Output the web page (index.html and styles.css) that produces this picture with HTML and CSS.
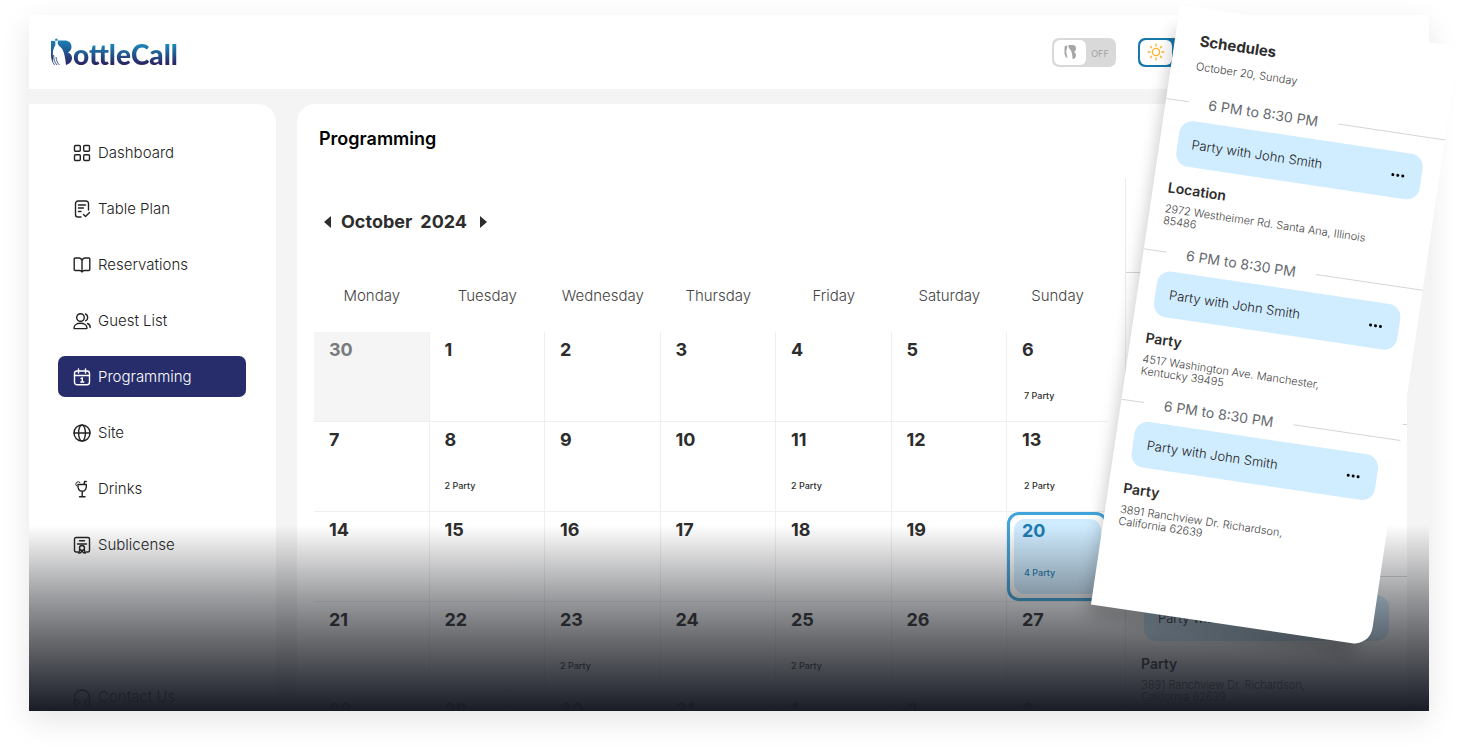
FILE: index.html
```html
<!DOCTYPE html>
<html lang="en">
<head>
<meta charset="utf-8">
<meta name="viewport" content="width=device-width, initial-scale=1">
<title>BottleCall – Programming</title>
<link rel="stylesheet" href="styles.css">
</head>
<body>
<svg class="defs" aria-hidden="true">
  <defs>
    <linearGradient id="brand" x1="0" y1="0" x2="0" y2="28" gradientUnits="userSpaceOnUse"><stop offset="0.1" stop-color="#1b80b4"/><stop offset="0.9" stop-color="#2a2766"/></linearGradient>
    <symbol id="bottle" viewBox="0 0 21 28">
      <path d="M0 3c1.500-1 3 .4 4.200-.2L4.400 7C2.500 10 1.800 13 1.800 16l.4 7C.8 21.500 0 20 0 18Z"/>
      <path d="M6.800 2.500h6.500c4.700 0 7.200 2.500 7.200 6.300 0 2.900-1.300 4.700-3.500 5.700 2.800 1 4 3 4 5.300 0 3.800-2.300 6-6 7.200C14.200 20 13.500 15 11.500 11.500 10 9 7.500 8 6.800 6Z"/>
      <path d="M4.200 1Q5.400-.2 6.500 1v1.800H4.200Z"/>
      <path d="M2.600 17c0 4 1 7.500 3.400 10M5 19c.3 3.500 1.500 6 3.500 8M.8 21c.5 2.500 1.400 4.500 2.800 6" fill="none" stroke="#2a3f80" stroke-width="0.900"/>
    </symbol>
  </defs>
</svg>
<div class="stage">
  <div class="app">
    <header class="topbar">
      <a class="logo" href="#" aria-label="BottleCall">
        <svg class="logo-mark" fill="url(#brand)" aria-hidden="true"><use href="#bottle"/></svg>
        <span class="logo-text">ottleCall</span>
      </a>
      <div class="toggles">
        <label class="toggle">
          <input type="checkbox" role="switch" aria-label="Bottle service">
          <span class="knob"><svg class="knob-bottle" viewBox="0 0 12 16" fill="#a6a6a6" aria-hidden="true"><path d="M.5 3Q1.500 1 3 1.500C4 4 1.500 6 2.500 9.500L3.500 14Q1 13 .5 10Z"/><path d="M4.500 1h4C11 1 12 2.500 12 4.500S11 7.500 10 8c1.200.7 2 1.700 2 3.200 0 2-1.200 3.500-3.300 4C8.200 11 8 8 6.500 6 5.500 4.500 4 4 4.500 1Z"/></svg></span>
          <span class="toggle-text">OFF</span>
        </label>
        <label class="toggle toggle-on">
          <input type="checkbox" role="switch" aria-label="Light theme" checked>
          <span class="knob"><svg class="sun" viewBox="0 0 18 18" fill="none" stroke="#fbb331" stroke-width="1.400" stroke-linecap="round" aria-hidden="true"><circle cx="9" cy="9" r="3.600"/><path d="M9 1.200v1.900M9 14.900v1.900M1.200 9h1.900M14.900 9h1.900M3.500 3.500l1.200 1.200M13.300 13.300l1.200 1.200M3.500 14.500l1.200-1.200M13.300 4.700l1.200-1.200"/></svg></span>
        </label>
      </div>
    </header>
    <div class="columns">
      <nav class="sidebar">
        <a class="nav-item" href="#"><svg viewBox="0 0 18 18"><rect x="1.500" y="1.500" width="5.800" height="5.800" rx="1"/><rect x="10.700" y="1.500" width="5.800" height="5.800" rx="1"/><rect x="1.500" y="10.700" width="5.800" height="5.800" rx="1"/><rect x="10.700" y="10.700" width="5.800" height="5.800" rx="1"/></svg>Dashboard</a>
        <a class="nav-item" href="#"><svg viewBox="0 0 18 18"><path d="M8 17H5a2.500 2.500 0 0 1-2.500-2.500v-11A2.500 2.500 0 0 1 5 1h8a2.500 2.500 0 0 1 2.500 2.500V10M5.500 5h7M5.500 8h5M5.500 11.500h2.500M10.500 14.500l2 2 4-4"/></svg>Table Plan</a>
        <a class="nav-item" href="#"><svg viewBox="0 0 18 18"><path d="M9 4.500C8.500 3 7.500 2 6 2H2.200Q1.200 2 1.200 3v10.500q0 1 1 1H6.500c1.300 0 2 .5 2.500 1.500.5-1 1.200-1.500 2.500-1.500h4.300q1 0 1-1V3q0-1-1-1H12c-1.500 0-2.500 1-3 2.500V16"/></svg>Reservations</a>
        <a class="nav-item" href="#"><svg viewBox="0 0 18 18"><circle cx="7.500" cy="5.500" r="3.800"/><path d="M1 16c0-3 3-4.800 6.500-4.800S14 13 14 16c0 .4-.3.600-.6.600H1.600c-.4 0-.6-.2-.6-.6ZM12.500 2c1.500.6 2.200 1.900 2.200 3.400s-.8 2.700-2.200 3.400M14.500 11.500c1.700.7 2.700 2 2.700 4"/></svg>Guest List</a>
        <a class="nav-item nav-active" href="#" aria-current="page"><svg viewBox="0 0 18 18"><rect x="1.500" y="3" width="15" height="13.800" rx="2.500"/><path d="M1.500 7.500h15M5.500 1v4M12.500 1v4M8 10.500l1.300-.7v4M7.800 14h3"/></svg>Programming</a>
        <a class="nav-item" href="#"><svg viewBox="0 0 18 18"><circle cx="9" cy="9" r="8"/><ellipse cx="9" cy="9" rx="3.400" ry="8"/><path d="M1 9h16"/></svg>Site</a>
        <a class="nav-item" href="#"><svg viewBox="0 0 18 18"><path d="M5 4.500h8.300c.6 4-1 6.800-4.100 6.800S4.400 8.500 5 4.500ZM9.200 11.500v5M6.500 16.700h5.500M11 4.500l.6-3h1.700"/><path d="M3.500 6A2.200 2.200 0 1 1 7 2.500" stroke-width="1"/></svg>Drinks</a>
        <a class="nav-item" href="#"><svg viewBox="0 0 18 18"><path d="M4.500 16H3a1.500 1.500 0 0 1-1.500-1.500V3A1.500 1.500 0 0 1 3 1.500h12A1.500 1.500 0 0 1 16.500 3v11.500A1.500 1.500 0 0 1 15 16h-1.500M6.500 4.800h5M4.500 8h9"/><circle cx="9" cy="12" r="2.500"/><path d="M7 13.500L5.500 17l2-.3L9 15l1.500 1.700 2 .3L11 13.500"/></svg>Sublicense</a>
        <a class="nav-item nav-contact" href="#"><svg viewBox="0 0 18 18"><path d="M1.500 14v-4.500a7.500 7.500 0 0 1 15 0V14M1.500 12.500a2.300 2.300 0 0 1 4 0v3a2 2 0 0 1-4 0ZM16.500 12.500a2.300 2.300 0 0 0-4 0v3a2 2 0 0 0 4 0Z"/></svg>Contact Us</a>
      </nav>
      <main class="main">
        <h1 class="title">Programming</h1>
        <div class="content">
          <section class="calendar">
            <div class="month">
              <button type="button" aria-label="Previous month"><svg viewBox="0 0 7 12"><path d="M7 0v12L0 6Z"/></svg></button>
              <h2 class="month-name"><span>October</span> <span>2024</span></h2>
              <button type="button" aria-label="Next month"><svg viewBox="0 0 7 12"><path d="M0 0v12l7-6Z"/></svg></button>
            </div>
            <table class="days">
              <thead><tr><th>Monday</th><th>Tuesday</th><th>Wednesday</th><th>Thursday</th><th>Friday</th><th>Saturday</th><th class="last">Sunday</th></tr></thead>
              <tbody>
                <tr><td class="outside"><div class="day"><b>30</b></div></td><td><div class="day"><b>1</b></div></td><td><div class="day"><b>2</b></div></td><td><div class="day"><b>3</b></div></td><td><div class="day"><b>4</b></div></td><td><div class="day"><b>5</b></div></td><td><div class="day"><b>6</b><span>7 Party</span></div></td></tr>
                <tr><td><div class="day"><b>7</b></div></td><td><div class="day"><b>8</b><span>2 Party</span></div></td><td><div class="day"><b>9</b></div></td><td><div class="day"><b>10</b></div></td><td><div class="day"><b>11</b><span>2 Party</span></div></td><td><div class="day"><b>12</b></div></td><td><div class="day"><b>13</b><span>2 Party</span></div></td></tr>
                <tr><td><div class="day"><b>14</b></div></td><td><div class="day"><b>15</b></div></td><td><div class="day"><b>16</b></div></td><td><div class="day"><b>17</b></div></td><td><div class="day"><b>18</b></div></td><td><div class="day"><b>19</b></div></td><td><div class="day today"><b>20</b><span>4 Party</span></div></td></tr>
                <tr><td><div class="day"><b>21</b></div></td><td><div class="day"><b>22</b></div></td><td><div class="day"><b>23</b><span>2 Party</span></div></td><td><div class="day"><b>24</b></div></td><td><div class="day"><b>25</b><span>2 Party</span></div></td><td><div class="day"><b>26</b></div></td><td><div class="day"><b>27</b></div></td></tr>
                <tr><td><div class="day"><b>28</b></div></td><td><div class="day"><b>29</b></div></td><td><div class="day"><b>30</b></div></td><td><div class="day"><b>31</b></div></td><td><div class="day"><b>1</b></div></td><td><div class="day"><b>2</b></div></td><td><div class="day"><b>3</b></div></td></tr>
              </tbody>
            </table>
          </section>
          <aside class="schedule schedule-docked" aria-hidden="true">
            <h2 class="schedule-title">Schedules</h2>
            <p class="schedule-date">October 20, Sunday</p>
            <div class="slot"><div class="slot-time">6 PM to 8:30 PM</div><div class="event">Party with John Smith<span class="dots"><i></i><i></i><i></i></span></div><h3>Location</h3><p class="address">2972 Westheimer Rd. Santa Ana, Illinois<br>85486</p></div>
            <div class="slot"><div class="slot-time">6 PM to 8:30 PM</div><div class="event">Party with John Smith<span class="dots"><i></i><i></i><i></i></span></div><h3>Party</h3><p class="address">4517 Washington Ave. Manchester,<br>Kentucky 39495</p></div>
            <div class="slot"><div class="slot-time">6 PM to 8:30 PM</div><div class="event">Party with John Smith<span class="dots"><i></i><i></i><i></i></span></div><h3>Party</h3><p class="address">3891 Ranchview Dr. Richardson,<br>California 62639</p></div>
          </aside>
        </div>
      </main>
    </div>
  </div>
  <aside class="schedule schedule-float">
    <h2 class="schedule-title">Schedules</h2>
    <p class="schedule-date">October 20, Sunday</p>
    <div class="slot"><div class="slot-time">6 PM to 8:30 PM</div><div class="event">Party with John Smith<button type="button" class="dots" aria-label="More"><i></i><i></i><i></i></button></div><h3>Location</h3><p class="address">2972 Westheimer Rd. Santa Ana, Illinois<br>85486</p></div>
    <div class="slot"><div class="slot-time">6 PM to 8:30 PM</div><div class="event">Party with John Smith<button type="button" class="dots" aria-label="More"><i></i><i></i><i></i></button></div><h3>Party</h3><p class="address">4517 Washington Ave. Manchester,<br>Kentucky 39495</p></div>
    <div class="slot"><div class="slot-time">6 PM to 8:30 PM</div><div class="event">Party with John Smith<button type="button" class="dots" aria-label="More"><i></i><i></i><i></i></button></div><h3>Party</h3><p class="address">3891 Ranchview Dr. Richardson,<br>California 62639</p></div>
  </aside>
</div>
</body>
</html>
```
FILE: styles.css
```css
* { box-sizing: border-box; }
body { margin: 0; padding: 15px 30px 42px 29px; background: #fff; color: #2d2d2d; font-family: Inter, "Liberation Sans", sans-serif; overflow: hidden; }
h1, h2, h3, p { margin: 0; }
a { color: inherit; text-decoration: none; }
button { padding: 0; border: 0; background: none; color: inherit; cursor: pointer; }
.defs { position: absolute; width: 0; height: 0; }

.stage { position: relative; box-shadow: 0 10px 28px rgba(0, 0, 0, 0.1); }
.app { position: relative; display: flex; flex-direction: column; height: calc(100vh - 57px); overflow: hidden; background: #f4f4f4; }
.app::after { content: ""; position: absolute; left: 0; right: 0; bottom: 0; height: 186px; pointer-events: none; background: linear-gradient(rgba(28, 32, 34, 0), rgba(28, 30, 36, 0.46) 41%, rgba(32, 35, 40, 0.68) 62%, rgba(30, 33, 42, 0.88) 84%, #191c25); }

.topbar { display: flex; flex: none; align-items: center; justify-content: space-between; height: 74px; padding: 0 227px 0 22px; background: #fff; }
.logo { display: flex; align-items: center; gap: 1px; }
.logo-mark { width: 21px; height: 28px; }
.logo-text { padding-top: 4px; font: 900 28px/32px Lato, sans-serif; background: linear-gradient(#1b86b8 30%, #2a2766 82%); background-clip: text; color: transparent; }
.toggles { display: flex; gap: 22px; }
.toggle { position: relative; display: flex; width: 64px; height: 29px; padding: 2px; border-radius: 7px; background: #d9d9d9; cursor: pointer; }
.toggle input { position: absolute; inset: 0; width: 100%; height: 100%; margin: 0; opacity: 0; cursor: pointer; }
.toggle-on { background: #1878aa; }
.knob { display: grid; place-items: center; width: 32px; border-radius: 6px; background: #fff; }
.knob-bottle { width: 12px; height: 16px; }
.sun { width: 18px; height: 18px; }
.toggle-text { flex: 1; font-size: 9px; line-height: 27px; text-align: center; color: #a3a3a3; }

.columns { display: flex; flex: 1; gap: 21px; min-height: 0; padding: 15px 22px 0 0; }
.sidebar { display: flex; flex: none; flex-direction: column; gap: 15px; width: 247px; padding: 28px 30px 0 29px; background: #fff; border-radius: 0 18px 0 0; }
.nav-item { display: flex; flex: none; align-items: center; gap: 7px; height: 41px; padding: 0 15px; border-radius: 7px; font-size: 15px; font-weight: 300; color: #222; }
.nav-item svg { width: 18px; height: 18px; fill: none; stroke: currentColor; stroke-width: 1.400; stroke-linecap: round; stroke-linejoin: round; }
.nav-active { background: #272d6b; color: #fff; }
.nav-contact { margin-top: 96px; }

.main { flex: 1; min-width: 0; background: #fff; border-radius: 18px 0 0 0; }
.title { padding: 24px 22px 28px; font-size: 18px; line-height: 22px; font-weight: 600; color: #000; }
.content { display: flex; }
.calendar { flex: 1; min-width: 0; padding: 32px 17px 0; }
.month { display: flex; align-items: center; gap: 10px; height: 24px; margin: 0 0 25px 10px; }
.month button { display: flex; }
.month svg { width: 7px; height: 12px; fill: currentColor; }
.month-name { display: flex; gap: 8px; margin-right: 3px; font-size: 18px; line-height: 24px; font-weight: 700; }

.days { width: 100%; table-layout: fixed; border-collapse: separate; border-spacing: 0; }
.days th { height: 73px; padding: 0; font-size: 15px; font-weight: 300; color: #444; }
.days .last { width: 101px; }
.days td { height: 90px; padding: 0; border: solid #efefef; border-width: 0 1px 1px 0; vertical-align: top; }
.days td:last-child { border-right: 0; }
.days .outside { background: #f5f5f5; color: #777b80; }
.day { display: flex; flex-direction: column; gap: 29px; height: 89px; padding: 7px 15px; }
.day b { font-size: 18px; line-height: 22px; }
.day span { font-size: 9px; line-height: 12px; font-weight: 500; }
td:last-child .day span { padding-left: 2px; }
.day.today { gap: 25px; padding: 5px 12px; border: 3px solid #40a4da; border-radius: 12px; background: linear-gradient(#cfecff, #cfecff) content-box; }
.day.today { position: relative; isolation: isolate; background: #fff; color: #1b7bb0; }
.day.today::before { content: ""; position: absolute; inset: 4px; z-index: -1; border-radius: 11px; background: #cfecff; }

.schedule { flex: none; width: 282px; }
.schedule-docked { border-left: 1px solid #ececec; }
.schedule-title { padding: 22px 25px 0; font-size: 15px; line-height: 22px; font-weight: 700; }
.schedule-date { padding: 6px 25px 0; margin-bottom: 27px; font-size: 11px; line-height: 16px; font-weight: 300; color: #444; }
.slot { height: 152px; }
.slot-time { display: flex; align-items: center; gap: 20px; height: 2px; font-size: 14px; white-space: nowrap; color: #666a6f; }
.slot-time::before, .slot-time::after { content: ""; height: 1px; background: #d6d6d6; }
.slot-time::before { width: 23px; }
.slot-time::after { flex: 1; }
.event { display: flex; align-items: center; justify-content: space-between; height: 46px; margin: 18px 18px 14px; padding: 0 17px 0 14px; border-radius: 13px; background: #d0ecff; font-size: 13px; font-weight: 300; color: #222; }
.dots { display: flex; gap: 2px; }
.dots i { width: 3px; height: 3px; border-radius: 50%; background: #000; }
.slot h3 { padding: 0 15px; font-size: 14px; line-height: 18px; font-weight: 600; }
.address { padding: 6px 15px 0; font-size: 11px; line-height: 12px; font-weight: 300; color: #444; white-space: nowrap; }

.schedule-float { position: absolute; top: -10px; right: -33px; height: 606px; background: #fff; border-radius: 0 0 18px 0; transform: rotate(8.45deg); transform-origin: 0 0; box-shadow: -8px 18px 16px -6px rgba(0, 0, 0, 0.2); }
```
